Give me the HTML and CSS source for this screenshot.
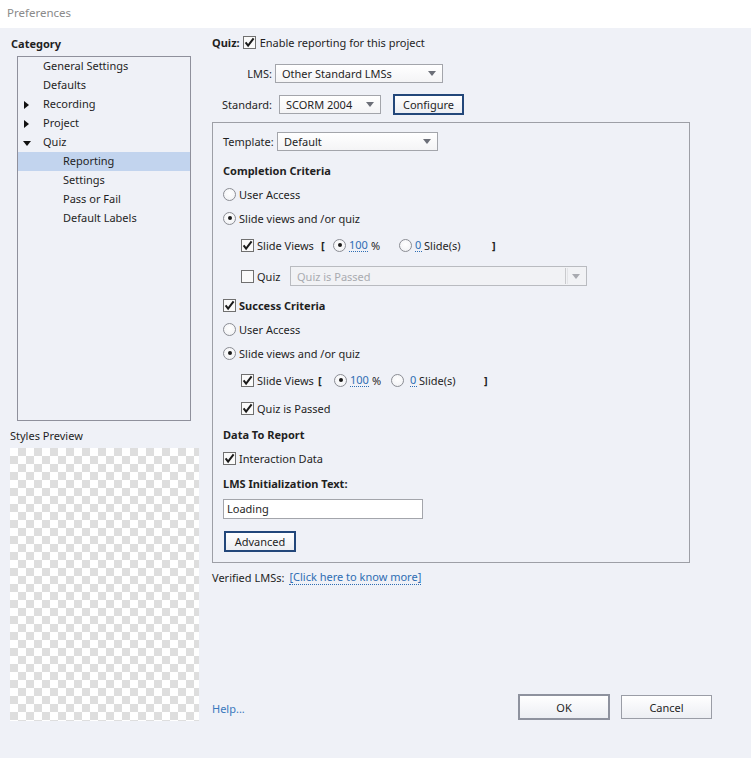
FILE: index.html
```html
<!DOCTYPE html>
<html>
<head>
<meta charset="utf-8">
<title>Preferences</title>
<link rel="stylesheet" href="styles.css">
</head>
<body>
<div class="titlebar">Preferences</div>
<div class="main">
  <div class="left">
    <div class="cat-title">Category</div>
    <div class="tree">
      <div class="node l1">General Settings</div>
      <div class="node l1">Defaults</div>
      <div class="node l1"><span class="arrow a-right"></span>Recording</div>
      <div class="node l1"><span class="arrow a-right"></span>Project</div>
      <div class="node l1"><span class="arrow a-down"></span>Quiz</div>
      <div class="node l2 selected">Reporting</div>
      <div class="node l2">Settings</div>
      <div class="node l2">Pass or Fail</div>
      <div class="node l2">Default Labels</div>
    </div>
    <div class="preview-label">Styles Preview</div>
    <div class="checker"></div>
  </div>

  <div class="right">
    <div class="quiz-row">
      <span class="bold">Quiz:</span>
      <svg class="cb" viewBox="0 0 13 13"><rect x="0.5" y="0.5" width="12" height="12" fill="#fafafa" stroke="#707070"/><path d="M2.6 6.4 5.1 9.6 10.6 2.4" fill="none" stroke="#1a1a1a" stroke-width="2"/></svg>
      <span>Enable reporting for this project</span>
    </div>

    <div class="form-row lms-row">
      <span class="flabel">LMS:</span>
      <div class="select sel-lms"><span class="sel-text">Other Standard LMSs</span><span class="sel-arrow"></span></div>
    </div>

    <div class="form-row std-row">
      <span class="flabel">Standard:</span>
      <div class="select sel-std"><span class="sel-text">SCORM 2004</span><span class="sel-arrow"></span></div>
      <div class="btn btn-focus btn-configure">Configure</div>
    </div>

    <div class="group">
      <div class="row row-template">
        <span class="tlabel">Template:</span>
        <div class="select sel-template"><span class="sel-text">Default</span><span class="sel-arrow"></span></div>
      </div>

      <div class="row bold mt7">Completion Criteria</div>
      <div class="row"><span class="radio"></span><span>User Access</span></div>
      <div class="row"><span class="radio on"></span><span>Slide views and /or quiz</span></div>
      <div class="row indent mt3">
        <svg class="cb" viewBox="0 0 13 13"><rect x="0.5" y="0.5" width="12" height="12" fill="#fafafa" stroke="#707070"/><path d="M2.6 6.4 5.1 9.6 10.6 2.4" fill="none" stroke="#1a1a1a" stroke-width="2"/></svg>
        <span class="sv sv-c">Slide Views</span>
        <span class="brk brk-c">[</span>
        <span class="radio on"></span>
        <span class="num num-100">100</span>
        <span class="pct pct-c">%</span>
        <span class="radio"></span>
        <span class="num num-0">0</span>
        <span class="slides slides-c">Slide(s)</span>
        <span class="brk">]</span>
      </div>
      <div class="row indent mt7">
        <svg class="cb" viewBox="0 0 13 13"><rect x="0.5" y="0.5" width="12" height="12" fill="#fafafa" stroke="#707070"/></svg>
        <span class="quiz-lbl">Quiz</span>
        <div class="select disabled sel-quiz"><span class="sel-text">Quiz is Passed</span><span class="sel-sep"></span><span class="sel-arrow"></span></div>
      </div>

      <div class="row mt5">
        <svg class="cb" viewBox="0 0 13 13"><rect x="0.5" y="0.5" width="12" height="12" fill="#fafafa" stroke="#707070"/><path d="M2.6 6.4 5.1 9.6 10.6 2.4" fill="none" stroke="#1a1a1a" stroke-width="2"/></svg>
        <span class="bold">Success Criteria</span>
      </div>
      <div class="row"><span class="radio"></span><span>User Access</span></div>
      <div class="row"><span class="radio on"></span><span>Slide views and /or quiz</span></div>
      <div class="row indent mt3">
        <svg class="cb" viewBox="0 0 13 13"><rect x="0.5" y="0.5" width="12" height="12" fill="#fafafa" stroke="#707070"/><path d="M2.6 6.4 5.1 9.6 10.6 2.4" fill="none" stroke="#1a1a1a" stroke-width="2"/></svg>
        <span class="sv sv-s">Slide Views</span>
        <span class="brk brk-s">[</span>
        <span class="radio on"></span>
        <span class="num num-100">100</span>
        <span class="pct pct-s">%</span>
        <span class="radio"></span>
        <span class="num num-0 n0-s">0</span>
        <span class="slides slides-s">Slide(s)</span>
        <span class="brk">]</span>
      </div>
      <div class="row indent mt4">
        <svg class="cb" viewBox="0 0 13 13"><rect x="0.5" y="0.5" width="12" height="12" fill="#fafafa" stroke="#707070"/><path d="M2.6 6.4 5.1 9.6 10.6 2.4" fill="none" stroke="#1a1a1a" stroke-width="2"/></svg>
        <span>Quiz is Passed</span>
      </div>

      <div class="row bold mt2">Data To Report</div>
      <div class="row">
        <svg class="cb" viewBox="0 0 13 13"><rect x="0.5" y="0.5" width="12" height="12" fill="#fafafa" stroke="#707070"/><path d="M2.6 6.4 5.1 9.6 10.6 2.4" fill="none" stroke="#1a1a1a" stroke-width="2"/></svg>
        <span>Interaction Data</span>
      </div>
      <div class="row bold mt1">LMS Initialization Text:</div>
      <div class="row mt2"><div class="textbox">Loading</div></div>
      <div class="row mt8"><div class="btn btn-focus btn-advanced">Advanced</div></div>
    </div>

    <div class="verified">
      <span>Verified LMSs:</span>
      <span class="link">[Click here to know more]</span>
    </div>

    <div class="footer">
      <span class="help">Help...</span>
      <div class="btn btn-ok">OK</div>
      <div class="btn btn-cancel">Cancel</div>
    </div>
  </div>
</div>
</body>
</html>
```

FILE: styles.css
```css
* { box-sizing: border-box; }
html, body { margin: 0; padding: 0; }
body {
  width: 751px;
  height: 758px;
  overflow: hidden;
  background: #eff1f7;
  font-family: "Noto Sans", "Open Sans", sans-serif;
  font-size: 11px;
  color: #1f1f1f;
}
.bold { font-weight: bold; }

.titlebar {
  height: 28px;
  background: #ffffff;
  color: #8a8a8a;
  padding-left: 7px;
  line-height: 26px;
  font-size: 11.5px;
}

.main { display: flex; height: 730px; }

/* left column */
.left {
  width: 212px;
  flex: none;
  padding-left: 10px;
  display: flex;
  flex-direction: column;
}
.cat-title {
  font-weight: bold;
  margin-top: 8px;
  padding-left: 1px;
  height: 15px;
  line-height: 15px;
}
.tree {
  margin-top: 5px;
  margin-left: 7px;
  width: 174px;
  height: 365px;
  border: 1px solid #8f909c;
  background: #eff1f7;
}
.node {
  height: 19px;
  line-height: 18px;
  position: relative;
  white-space: nowrap;
}
.node.l1 { padding-left: 25px; }
.node.l2 { padding-left: 45px; }
.node.selected { background: #c2d4ee; }
.arrow {
  position: absolute;
  left: 6px;
  top: 6px;
  width: 0;
  height: 0;
}
.a-right {
  border-top: 4px solid transparent;
  border-bottom: 4px solid transparent;
  border-left: 5px solid #111;
}
.a-down {
  top: 8px;
  left: 5px;
  border-left: 4px solid transparent;
  border-right: 4px solid transparent;
  border-top: 5px solid #111;
}
.preview-label {
  margin-top: 7px;
  height: 15px;
  line-height: 15px;
}
.checker {
  margin-top: 5px;
  width: 189px;
  height: 273px;
  background: repeating-conic-gradient(#dedede 0 25%, #ffffff 0 50%) 0 0 / 16px 16px;
}

/* right column */
.right {
  flex: 1;
  display: flex;
  flex-direction: column;
  padding-top: 6px;
}
.quiz-row {
  height: 16px;
  display: flex;
  align-items: center;
  gap: 3px;
}

.form-row { display: flex; align-items: center; }
.flabel { width: 63px; text-align: right; padding-right: 3px; flex: none; }
.lms-row { margin-top: 14px; height: 19px; }
.std-row { margin-top: 11px; height: 20px; }

.select {
  display: flex;
  align-items: center;
  height: 19px;
  border: 1px solid #a3a5ab;
  background: linear-gradient(#ffffff, #f4f4f6);
  padding-left: 6px;
  padding-right: 6px;
  flex: none;
}
.sel-text { flex: 1; white-space: nowrap; overflow: hidden; }
.sel-arrow {
  width: 0; height: 0;
  border-left: 4px solid transparent;
  border-right: 4px solid transparent;
  border-top: 5px solid #6c6f78;
}
.sel-lms { width: 168px; }
.sel-std { width: 102px; margin-left: 4px; }
.sel-template { width: 161px; }
.sel-quiz { width: 297px; height: 20px; }
.select.disabled { border-color: #b9bbc0; background: #f1f2f5; color: #a9abb0; }
.disabled .sel-arrow { border-top-color: #a8aab0; }
.sel-sep { width: 1px; height: 16px; background: #c9cacd; margin-right: 6px; box-shadow: 2px 0 0 #e3e4e7; }

.btn {
  display: flex;
  align-items: center;
  justify-content: center;
  background: linear-gradient(#ffffff, #eceef3);
  flex: none;
}
.btn-focus { border: 2px solid #23477a; }
.btn-configure { width: 71px; height: 21px; margin-left: 12px; }
.btn-advanced { width: 72px; height: 21px; margin-left: 1px; }

.group {
  margin-top: 8px;
  width: 478px;
  height: 441px;
  border: 1px solid #9d9fa6;
  padding: 8px 10px 0 10px;
}
.row {
  height: 24px;
  display: flex;
  align-items: center;
  white-space: nowrap;
}
.row-template { height: 20px; }
.tlabel { width: 54px; flex: none; }
.indent { padding-left: 18px; }
.mt1 { margin-top: 1px; }
.mt2 { margin-top: 2px; }
.mt3 { margin-top: 3px; }
.mt4 { margin-top: 4px; }
.mt5 { margin-top: 5px; }
.mt7 { margin-top: 7px; }
.mt8 { margin-top: 8px; }

.cb { width: 13px; height: 13px; flex: none; margin-right: 3px; display: block; }
.quiz-row .cb { margin-right: 1px; }
.radio {
  width: 13px;
  height: 13px;
  flex: none;
  border: 1px solid #8b8d94;
  border-radius: 50%;
  background: radial-gradient(circle at 50% 40%, #ffffff, #eeeff2);
  margin-right: 3px;
  display: flex;
  align-items: center;
  justify-content: center;
}
.radio.on::after {
  content: "";
  width: 4px;
  height: 4px;
  border-radius: 50%;
  background: #1a1a1a;
}

.sv { flex: none; }
.sv-c { width: 64px; }
.sv-s { width: 61px; }
.brk { font-weight: bold; flex: none; }
.brk-c { width: 12px; }
.brk-s { width: 16px; }
.num {
  color: #2e6db3;
  border-bottom: 1px dotted #2e6db3;
  line-height: 13px;
  flex: none;
}
.num-100 { width: 19px; margin-right: 3px; }
.num-0 { width: 7px; margin-right: 2px; }
.n0-s { margin-left: 3px; }
.pct { flex: none; }
.pct-c { width: 28px; }
.pct-s { width: 19px; }
.slides { flex: none; }
.slides-c { width: 68px; }
.slides-s { width: 65px; }
.quiz-lbl { width: 33px; flex: none; }

.textbox {
  width: 200px;
  height: 20px;
  border: 1px solid #a3a5ab;
  background: #ffffff;
  padding-left: 3px;
  line-height: 18px;
}

.verified {
  margin-top: 6px;
  height: 16px;
  display: flex;
  align-items: center;
  gap: 5px;
}
.link {
  color: #2e6db3;
  border-bottom: 1px dotted #2e6db3;
  line-height: 14px;
}

.footer {
  margin-top: auto;
  margin-bottom: 38px;
  height: 26px;
  display: flex;
  align-items: center;
}
.help { color: #3a78bd; flex: 1; padding-top: 2px; }
.btn-ok { width: 92px; height: 26px; border: 2px solid #8e929e; }
.btn-cancel { width: 91px; height: 24px; border: 1px solid #9a9da6; margin-left: 11px; margin-right: 39px; }
```
